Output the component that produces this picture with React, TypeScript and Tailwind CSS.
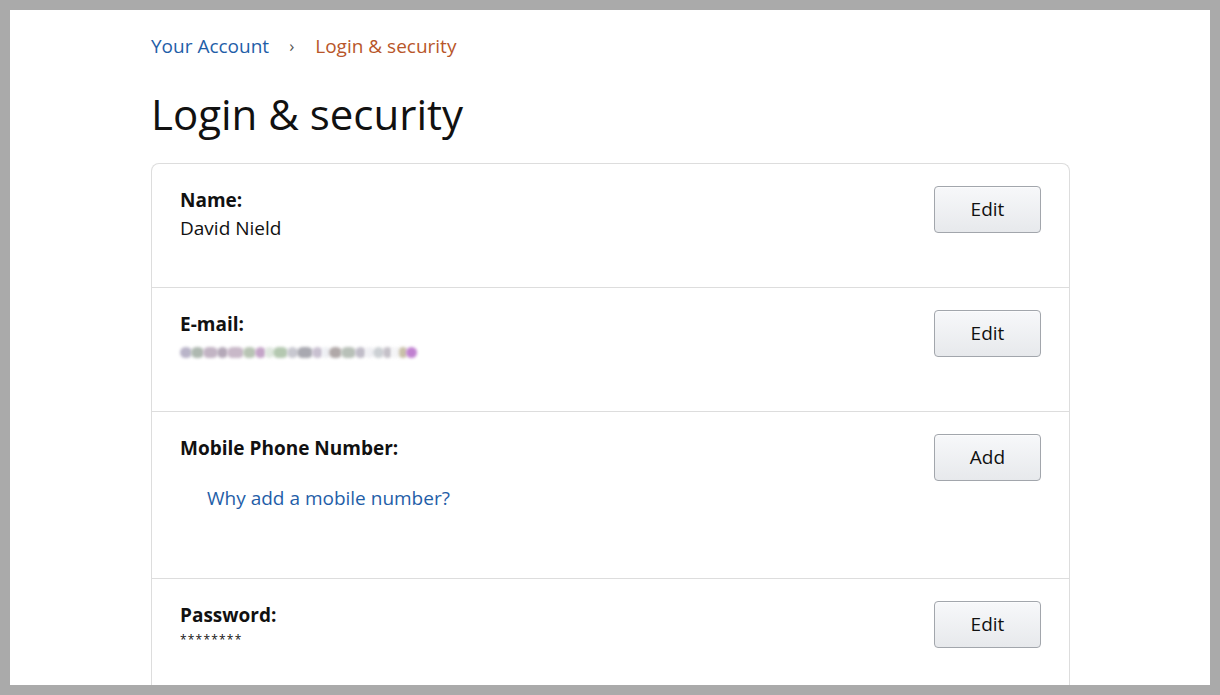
import React from "react";

const font = { fontFamily: '"Open Sans", "Noto Sans", Arial, sans-serif' };

const blurDots = [
  { w: 12, c: "#b9b4c8" },
  { w: 13, c: "#aeb8b0" },
  { w: 15, c: "#c2b4c4" },
  { w: 11, c: "#b4a8b8" },
  { w: 17, c: "#c8b8c8" },
  { w: 13, c: "#b8c4b4" },
  { w: 11, c: "#c4a4c8" },
  { w: 9, c: "#e0e8e0" },
  { w: 15, c: "#b4c8b0" },
  { w: 11, c: "#c8c8d0" },
  { w: 16, c: "#a8a8b0" },
  { w: 11, c: "#c8c0d0" },
  { w: 8, c: "#eef0f4" },
  { w: 13, c: "#b0a8a8" },
  { w: 15, c: "#b8c0b8" },
  { w: 11, c: "#c0bcc8" },
  { w: 9, c: "#f0f0f4" },
  { w: 11, c: "#ccd0d4" },
  { w: 9, c: "#c4c0c8" },
  { w: 9, c: "#f4f4f6" },
  { w: 8, c: "#c8c0a8" },
  { w: 11, c: "#c080d0" },
];

function BlurredEmail() {
  return (
    <div className="flex items-center h-[28px] -space-x-[1px]">
      {blurDots.map((d, i) => (
        <span
          key={i}
          className="h-[11px] rounded-full blur-[1.5px]"
          style={{ width: d.w, backgroundColor: d.c }}
        />
      ))}
    </div>
  );
}

function Btn({ label }: { label: string }) {
  return (
    <button
      type="button"
      className="w-[107px] h-[47px] rounded-[4px] border border-[#a2a6ac] bg-gradient-to-b from-[#f7f8fa] to-[#e7e9ec] shadow-[0_1px_0_rgba(255,255,255,0.6)_inset] text-[19px] text-[#111] shrink-0"
    >
      {label}
    </button>
  );
}

function Row({
  height,
  last,
  children,
  action,
}: {
  height: string;
  last?: boolean;
  children: React.ReactNode;
  action: string;
}) {
  return (
    <div
      className={`flex justify-between items-start px-[28px] pt-[22px] ${height} ${
        last ? "" : "border-b border-[#dddddd]"
      }`}
    >
      <div className="flex flex-col text-[19px] leading-[28px] text-[#111]">{children}</div>
      <Btn label={action} />
    </div>
  );
}

export default function App() {
  return (
    <div className="w-[1220px] h-[695px] bg-[#aaaaaa] p-[10px]" style={font}>
      <div className="w-full h-full bg-white overflow-hidden pl-[141px] pt-[22px]">
        {/* Breadcrumb */}
        <div className="flex items-center text-[19px] leading-[28px]">
          <span className="text-[#1f5ea8]">Your Account</span>
          <span className="ml-[20px] mr-[21px] text-[#555] text-[17px]">›</span>
          <span className="text-[#b8562a]">Login &amp; security</span>
        </div>

        {/* Heading */}
        <h1 className="mt-[29px] text-[42px] leading-[50px] text-[#111]">Login &amp; security</h1>

        {/* Card */}
        <div className="mt-[24px] w-[919px] rounded-[8px] border border-[#dddddd] border-b-0 rounded-b-none">
          <Row height="h-[124px]" action="Edit">
            <span className="font-bold">Name:</span>
            <span>David Nield</span>
          </Row>
          <Row height="h-[124px]" action="Edit">
            <span className="font-bold">E-mail:</span>
            <BlurredEmail />
          </Row>
          <Row height="h-[167px]" action="Add">
            <span className="font-bold">Mobile Phone Number:</span>
            <span className="mt-[22px] ml-[27px] text-[#1f5ea8]">Why add a mobile number?</span>
          </Row>
          <Row height="h-[120px]" action="Edit" last>
            <span className="font-bold">Password:</span>
            <span className="text-[12px] leading-[22px] tracking-[1.2px]">********</span>
          </Row>
        </div>
      </div>
    </div>
  );
}
